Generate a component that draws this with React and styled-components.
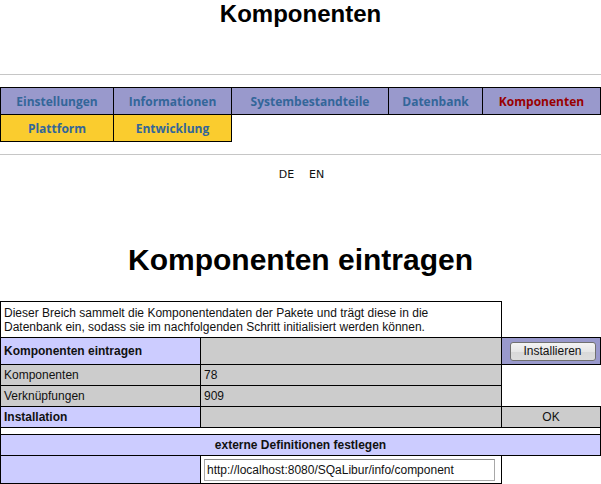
import React from "react";
import styled, { createGlobalStyle } from "styled-components";

const Global = createGlobalStyle`
  html, body { margin: 0; padding: 0; background: #fff; }
  body { font-family: "Liberation Sans", Arial, sans-serif; color: #000; }
`;

const Page = styled.div`
  width: 601px;
`;

const Title = styled.h1`
  margin: 0 0 46px;
  font-size: 24px;
  line-height: 28px;
  font-weight: 700;
  text-align: center;
`;

const Divider = styled.hr`
  margin: 0;
  height: 0;
  border: 0;
  border-top: 1px solid #c6c6c6;
`;

const NavTable = styled.table`
  margin: 12px 0 12px;
  border-collapse: collapse;
  table-layout: fixed;
  width: 600px;
`;

const NavRow = styled.tr`
  height: 27px;
`;

const NavCell = styled.td`
  border: 1px solid #000;
  padding: 0;
  text-align: center;
  vertical-align: middle;
  background: ${(p) => (p.$tone === "yellow" ? "#facc2e" : "#9999cc")};
  color: ${(p) => (p.$active ? "#990000" : "#336699")};
  font-family: "Open Sans", "DejaVu Sans", sans-serif;
  font-weight: 700;
  font-size: 12px;
`;

const LangBar = styled.div`
  display: flex;
  justify-content: center;
  gap: 15px;
  margin: 13px 0 0;
  padding-left: 2px;
`;

const Lang = styled.span`
  font-family: "DejaVu Sans", sans-serif;
  font-size: 11px;
  line-height: 13px;
  color: #111;
`;

const Heading = styled.h2`
  margin: 62px 0 24px;
  font-size: 30px;
  line-height: 34px;
  font-weight: 700;
  text-align: center;
`;

const DataTable = styled.table`
  border-collapse: collapse;
  table-layout: fixed;
  width: 600px;
  font-size: 12px;
`;

const Row = styled.tr`
  height: ${(p) => p.$h}px;
`;

const tones = {
  lavender: "#ccccff",
  grey: "#cccccc",
  purple: "#9999cc",
  white: "#ffffff",
};

const Cell = styled.td`
  border: 1px solid #000;
  padding: ${(p) => (p.$pad !== undefined ? p.$pad : "0 3px")};
  background: ${(p) => tones[p.$tone] || "transparent"};
  font-weight: ${(p) => (p.$bold ? 700 : 400)};
  text-align: ${(p) => p.$align || "left"};
  vertical-align: middle;
  line-height: 14px;
  color: #111;
`;

const Button = styled.button`
  font-family: "Liberation Sans", Arial, sans-serif;
  font-size: 12px;
  color: #111;
  width: 86px;
  height: 19px;
  margin-left: 3px;
  padding: 0;
  border: 1px solid #707070;
  border-radius: 3px;
  background: linear-gradient(#f4f4f4, #e6e6e6 50%, #d8d8d8 51%, #dddddd);
`;

const UrlInput = styled.input`
  box-sizing: border-box;
  width: 291px;
  height: 22px;
  margin: 0;
  padding: 0 2px;
  font-family: "Liberation Sans", Arial, sans-serif;
  font-size: 12px;
  color: #111;
  border: 1px solid #a8a8a8;
  border-top-color: #8a8a8a;
  background: #fff;
`;

export default function App() {
  return (
    <Page>
      <Global />
      <Title>Komponenten</Title>
      <Divider />
      <NavTable>
        <colgroup>
          <col style={{ width: 113 }} />
          <col style={{ width: 118 }} />
          <col style={{ width: 157 }} />
          <col style={{ width: 94 }} />
          <col style={{ width: 118 }} />
        </colgroup>
        <tbody>
          <NavRow>
            <NavCell>Einstellungen</NavCell>
            <NavCell>Informationen</NavCell>
            <NavCell>Systembestandteile</NavCell>
            <NavCell>Datenbank</NavCell>
            <NavCell $active>Komponenten</NavCell>
          </NavRow>
          <NavRow>
            <NavCell $tone="yellow">Plattform</NavCell>
            <NavCell $tone="yellow">Entwicklung</NavCell>
          </NavRow>
        </tbody>
      </NavTable>
      <Divider />
      <LangBar>
        <Lang>DE</Lang>
        <Lang>EN</Lang>
      </LangBar>
      <Heading>Komponenten eintragen</Heading>
      <DataTable>
        <colgroup>
          <col style={{ width: 200 }} />
          <col style={{ width: 301 }} />
          <col style={{ width: 99 }} />
        </colgroup>
        <tbody>
          <Row $h={36}>
            <Cell colSpan={2} $tone="white">
              Dieser Breich sammelt die Komponentendaten der Pakete und trägt diese in die
              <br />
              Datenbank ein, sodass sie im nachfolgenden Schritt initialisiert werden können.
            </Cell>
          </Row>
          <Row $h={27}>
            <Cell $tone="lavender" $bold>Komponenten eintragen</Cell>
            <Cell $tone="grey" />
            <Cell $tone="purple" $align="center" $pad="0">
              <Button type="button">Installieren</Button>
            </Cell>
          </Row>
          <Row $h={21}>
            <Cell $tone="grey">Komponenten</Cell>
            <Cell $tone="grey">78</Cell>
          </Row>
          <Row $h={21}>
            <Cell $tone="grey">Verknüpfungen</Cell>
            <Cell $tone="grey">909</Cell>
          </Row>
          <Row $h={21}>
            <Cell $tone="lavender" $bold>Installation</Cell>
            <Cell $tone="grey" />
            <Cell $tone="grey" $align="center">OK</Cell>
          </Row>
          <Row $h={7}>
            <Cell colSpan={3} $tone="white" $pad="0" />
          </Row>
          <Row $h={21}>
            <Cell colSpan={3} $tone="lavender" $bold $align="center">
              externe Definitionen festlegen
            </Cell>
          </Row>
          <Row $h={28}>
            <Cell $tone="lavender" />
            <Cell $tone="white">
              <UrlInput readOnly value="http://localhost:8080/SQaLibur/info/component" />
            </Cell>
          </Row>
        </tbody>
      </DataTable>
    </Page>
  );
}
